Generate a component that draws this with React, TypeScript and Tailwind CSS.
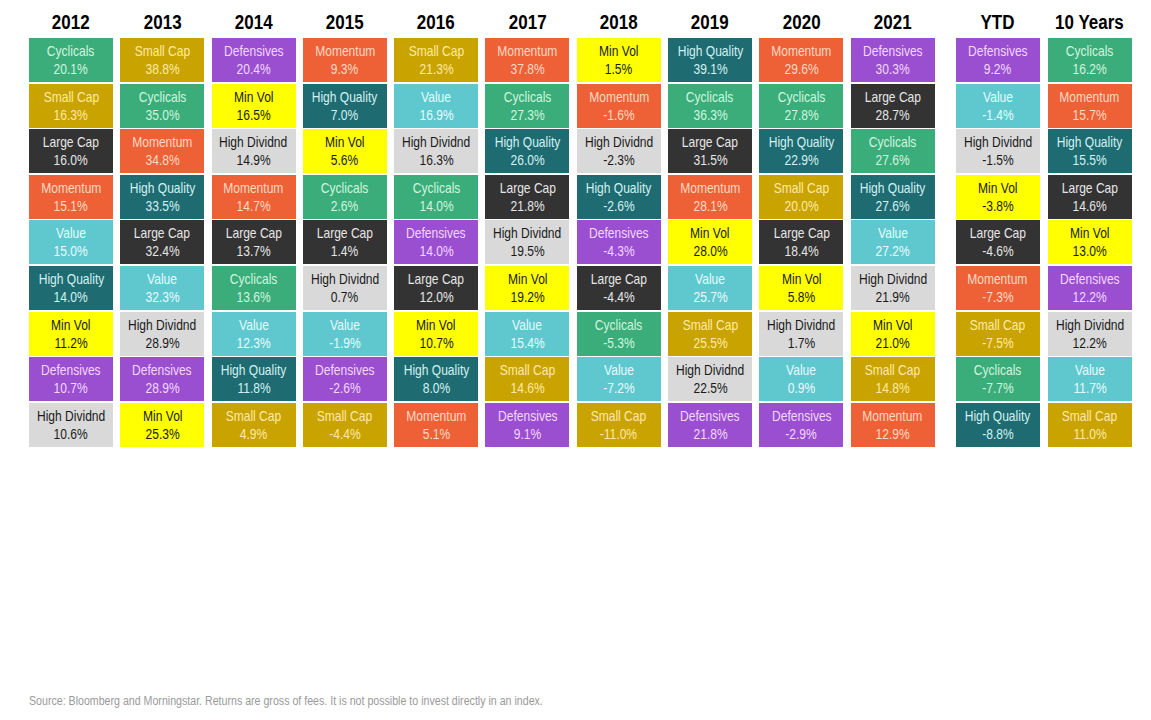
import React from 'react';

type Cat =
  | 'Cyclicals'
  | 'Small Cap'
  | 'Large Cap'
  | 'Momentum'
  | 'Value'
  | 'High Quality'
  | 'Min Vol'
  | 'Defensives'
  | 'High Dividnd';

const styles: Record<Cat, string> = {
  Cyclicals: 'bg-[#3aad7b] text-[#d2f5de]',
  'Small Cap': 'bg-[#c9a300] text-[#ffeaa6]',
  'Large Cap': 'bg-[#333333] text-[#e6e6e6]',
  Momentum: 'bg-[#ee6136] text-[#ffd9c4]',
  Value: 'bg-[#5fc8cf] text-[#e8fbfb]',
  'High Quality': 'bg-[#1e6c72] text-[#d3f1f1]',
  'Min Vol': 'bg-[#ffff00] text-[#1a1a1a]',
  Defensives: 'bg-[#9a4fd0] text-[#f3d8ff]',
  'High Dividnd': 'bg-[#d9d9d9] text-[#1a1a1a]',
};

type Col = { year: string; rows: [Cat, string][] };

const columns: Col[] = [
  { year: '2012', rows: [['Cyclicals', '20.1%'], ['Small Cap', '16.3%'], ['Large Cap', '16.0%'], ['Momentum', '15.1%'], ['Value', '15.0%'], ['High Quality', '14.0%'], ['Min Vol', '11.2%'], ['Defensives', '10.7%'], ['High Dividnd', '10.6%']] },
  { year: '2013', rows: [['Small Cap', '38.8%'], ['Cyclicals', '35.0%'], ['Momentum', '34.8%'], ['High Quality', '33.5%'], ['Large Cap', '32.4%'], ['Value', '32.3%'], ['High Dividnd', '28.9%'], ['Defensives', '28.9%'], ['Min Vol', '25.3%']] },
  { year: '2014', rows: [['Defensives', '20.4%'], ['Min Vol', '16.5%'], ['High Dividnd', '14.9%'], ['Momentum', '14.7%'], ['Large Cap', '13.7%'], ['Cyclicals', '13.6%'], ['Value', '12.3%'], ['High Quality', '11.8%'], ['Small Cap', '4.9%']] },
  { year: '2015', rows: [['Momentum', '9.3%'], ['High Quality', '7.0%'], ['Min Vol', '5.6%'], ['Cyclicals', '2.6%'], ['Large Cap', '1.4%'], ['High Dividnd', '0.7%'], ['Value', '-1.9%'], ['Defensives', '-2.6%'], ['Small Cap', '-4.4%']] },
  { year: '2016', rows: [['Small Cap', '21.3%'], ['Value', '16.9%'], ['High Dividnd', '16.3%'], ['Cyclicals', '14.0%'], ['Defensives', '14.0%'], ['Large Cap', '12.0%'], ['Min Vol', '10.7%'], ['High Quality', '8.0%'], ['Momentum', '5.1%']] },
  { year: '2017', rows: [['Momentum', '37.8%'], ['Cyclicals', '27.3%'], ['High Quality', '26.0%'], ['Large Cap', '21.8%'], ['High Dividnd', '19.5%'], ['Min Vol', '19.2%'], ['Value', '15.4%'], ['Small Cap', '14.6%'], ['Defensives', '9.1%']] },
  { year: '2018', rows: [['Min Vol', '1.5%'], ['Momentum', '-1.6%'], ['High Dividnd', '-2.3%'], ['High Quality', '-2.6%'], ['Defensives', '-4.3%'], ['Large Cap', '-4.4%'], ['Cyclicals', '-5.3%'], ['Value', '-7.2%'], ['Small Cap', '-11.0%']] },
  { year: '2019', rows: [['High Quality', '39.1%'], ['Cyclicals', '36.3%'], ['Large Cap', '31.5%'], ['Momentum', '28.1%'], ['Min Vol', '28.0%'], ['Value', '25.7%'], ['Small Cap', '25.5%'], ['High Dividnd', '22.5%'], ['Defensives', '21.8%']] },
  { year: '2020', rows: [['Momentum', '29.6%'], ['Cyclicals', '27.8%'], ['High Quality', '22.9%'], ['Small Cap', '20.0%'], ['Large Cap', '18.4%'], ['Min Vol', '5.8%'], ['High Dividnd', '1.7%'], ['Value', '0.9%'], ['Defensives', '-2.9%']] },
  { year: '2021', rows: [['Defensives', '30.3%'], ['Large Cap', '28.7%'], ['Cyclicals', '27.6%'], ['High Quality', '27.6%'], ['Value', '27.2%'], ['High Dividnd', '21.9%'], ['Min Vol', '21.0%'], ['Small Cap', '14.8%'], ['Momentum', '12.9%']] },
];

const summary: Col[] = [
  { year: 'YTD', rows: [['Defensives', '9.2%'], ['Value', '-1.4%'], ['High Dividnd', '-1.5%'], ['Min Vol', '-3.8%'], ['Large Cap', '-4.6%'], ['Momentum', '-7.3%'], ['Small Cap', '-7.5%'], ['Cyclicals', '-7.7%'], ['High Quality', '-8.8%']] },
  { year: '10 Years', rows: [['Cyclicals', '16.2%'], ['Momentum', '15.7%'], ['High Quality', '15.5%'], ['Large Cap', '14.6%'], ['Min Vol', '13.0%'], ['Defensives', '12.2%'], ['High Dividnd', '12.2%'], ['Value', '11.7%'], ['Small Cap', '11.0%']] },
];

function Column({ col }: { col: Col }) {
  return (
    <div className="flex w-[84px] flex-col">
      <div className="flex h-[38px] items-center justify-center pt-[7px] text-[19.5px] font-bold text-black">
        <span className="inline-block scale-x-[0.87] whitespace-nowrap">{col.year}</span>
      </div>
      <div className="flex flex-col gap-[1.6px]">
        {col.rows.map(([cat, val], i) => (
          <div
            key={i}
            className={`flex h-[44px] flex-col items-center justify-center text-[14.5px] leading-[18px] ${styles[cat]}`}
          >
            <span className="inline-block scale-x-[0.83] whitespace-nowrap">{cat}</span>
            <span className="inline-block scale-x-[0.83] whitespace-nowrap">{val}</span>
          </div>
        ))}
      </div>
    </div>
  );
}

export default function App() {
  return (
    <div className="relative flex h-[720px] w-[1151px] flex-col bg-white font-['Liberation_Sans',Arial,sans-serif]">
      <div className="flex pl-[29px]">
        <div className="flex gap-[7.3px]">
          {columns.map((c) => (
            <Column key={c.year} col={c} />
          ))}
        </div>
        <div className="ml-[21px] flex gap-[8px]">
          {summary.map((c) => (
            <Column key={c.year} col={c} />
          ))}
        </div>
      </div>
      <div className="mt-auto pb-[11px] pl-[29px] text-[12.5px] leading-[16px] text-[#9a9a9a]">
        <span className="inline-block origin-left scale-x-[0.85] whitespace-nowrap">
          Source: Bloomberg and Morningstar. Returns are gross of fees. It is not possible to invest directly in an index.
        </span>
      </div>
    </div>
  );
}
